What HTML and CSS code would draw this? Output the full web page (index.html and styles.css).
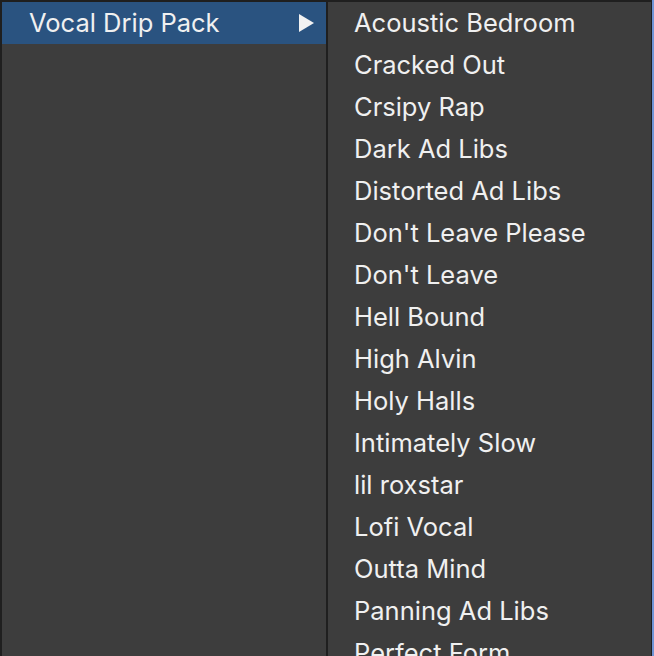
FILE: index.html
```html
<!DOCTYPE html>
<html>
<head>
<meta charset="utf-8">
<link rel="stylesheet" href="styles.css">
</head>
<body>
<div class="menus">
  <div class="menu parent">
    <div class="item selected">
      <span class="label">Vocal Drip Pack</span>
      <svg class="arrow" width="15" height="18" viewBox="0 0 15 18"><polygon points="0,0 15,9 0,18" fill="#f2f2f2"/></svg>
    </div>
  </div>
  <div class="menu sub">
    <div class="item">Acoustic Bedroom</div>
    <div class="item">Cracked Out</div>
    <div class="item">Crsipy Rap</div>
    <div class="item">Dark Ad Libs</div>
    <div class="item">Distorted Ad Libs</div>
    <div class="item">Don't Leave Please</div>
    <div class="item">Don't Leave</div>
    <div class="item">Hell Bound</div>
    <div class="item">High Alvin</div>
    <div class="item">Holy Halls</div>
    <div class="item">Intimately Slow</div>
    <div class="item">lil roxstar</div>
    <div class="item">Lofi Vocal</div>
    <div class="item">Outta Mind</div>
    <div class="item">Panning Ad Libs</div>
    <div class="item">Perfect Form</div>
  </div>
  <div class="edge"></div>
</div>
</body>
</html>
```

FILE: styles.css
```css
html, body {
  margin: 0;
  padding: 0;
  height: 100%;
  overflow: hidden;
  background: #1f1f1f;
}
.menus {
  display: flex;
  height: 656px;
  padding-top: 2px;
  padding-left: 2px;
  box-sizing: border-box;
  gap: 2px;
  font-family: "Inter", "Liberation Sans", sans-serif;
  font-size: 25.5px;
  color: #f0f0f0;
}
.menu {
  background: #3d3d3d;
  overflow: hidden;
}
.parent {
  width: 324px;
  flex: none;
}
.sub {
  width: 323px;
  flex: none;
}
.item {
  height: 42px;
  box-sizing: border-box;
  padding-bottom: 2px;
  display: flex;
  align-items: center;
  white-space: nowrap;
}
.sub .item {
  padding-left: 26px;
}
.selected {
  background: #2a5380;
  padding-left: 27px;
  padding-right: 12px;
  padding-bottom: 0;
  justify-content: space-between;
}
.selected .label {
  margin-bottom: 2px;
}
.arrow {
  display: block;
}
.edge {
  margin-left: -1px;
  width: 2px;
  flex: none;
  background: #6f95d6;
  margin-top: -2px;
}
```
